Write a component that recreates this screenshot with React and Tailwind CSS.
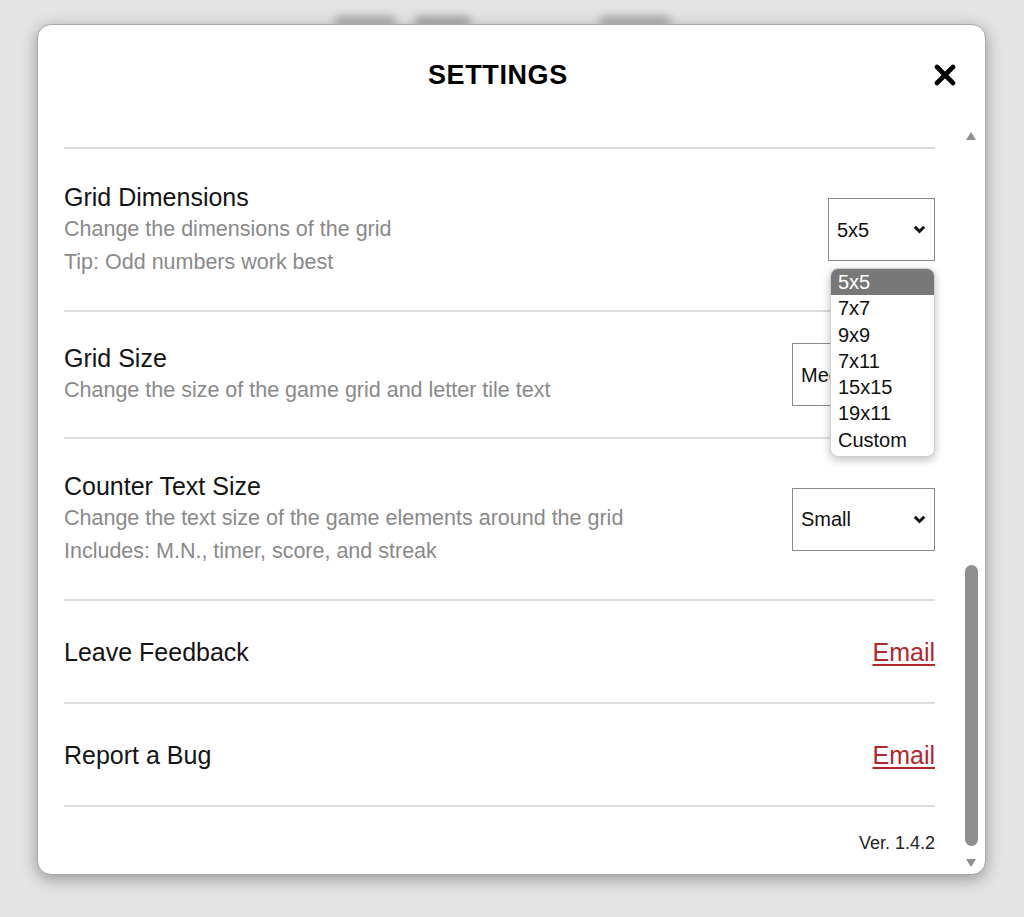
import React from "react";

const font = { fontFamily: '"Liberation Sans", Arial, sans-serif' };

function Chevron() {
  return (
    <svg width="13" height="9" viewBox="0 0 13 9" className="shrink-0">
      <polyline points="1.8,1.8 6.5,6.5 11.2,1.8" fill="none" stroke="#111" strokeWidth="3" />
    </svg>
  );
}

function FakeSelect({ value, width }) {
  return (
    <div
      className={`flex items-center justify-between h-[63px] border border-[#8a8a8a] bg-white pl-[8px] pr-[8px] text-[20px] text-[#111] overflow-hidden ${width}`}
    >
      <span>{value}</span>
      <Chevron />
    </div>
  );
}

function Row({ title, lines, right, height }) {
  return (
    <div className={`flex items-center justify-between border-b-2 border-[#dcdcdc] ${height}`}>
      <div className="flex flex-col">
        <div className="text-[25px] leading-[32px] text-[#141414]">{title}</div>
        {lines.map((l) => (
          <div key={l} className="text-[21.5px] leading-[33px] text-[#8a8a8a]">
            {l}
          </div>
        ))}
      </div>
      {right}
    </div>
  );
}

function EmailLink() {
  return (
    <a href="#" className="text-[25px] leading-[30px] text-[#b3262b] underline underline-offset-[3px]">
      Email
    </a>
  );
}

export default function App() {
  const options = ["5x5", "7x7", "9x9", "7x11", "15x15", "19x11", "Custom"];

  return (
    <div className="w-full h-[917px] bg-[#e4e4e4] overflow-hidden" style={font}>
      {/* blurred page header behind the overlay */}
      <div className="h-[24px] flex items-end gap-[130px] pl-[335px] overflow-hidden">
        <div className="flex gap-[20px] mb-[-6px] blur-[4px]">
          <div className="w-[60px] h-[14px] rounded bg-[#a5a5a5]" />
          <div className="w-[55px] h-[14px] rounded bg-[#a0a0a0]" />
        </div>
        <div className="w-[70px] h-[14px] mb-[-6px] rounded bg-[#a5a5a5] blur-[4px]" />
      </div>

      {/* modal */}
      <div className="ml-[37px] w-[949px] h-[851px] bg-white rounded-[14px] border border-[#a8a8a8] shadow-[0_4px_16px_rgba(0,0,0,0.35)] flex flex-col overflow-hidden">
        <div className="h-[100px] shrink-0 flex items-center justify-between pl-[390px] pr-[28px]">
          <h1 className="text-[27px] font-bold tracking-[0.6px] text-black">SETTINGS</h1>
          <button className="w-[24px] h-[24px] flex items-center justify-center">
            <svg width="22" height="22" viewBox="0 0 22 22">
              <line x1="3" y1="3" x2="19" y2="19" stroke="#000" strokeWidth="4.6" strokeLinecap="round" />
              <line x1="19" y1="3" x2="3" y2="19" stroke="#000" strokeWidth="4.6" strokeLinecap="round" />
            </svg>
          </button>
        </div>

        <div className="flex-1 flex min-h-0">
          {/* scroll content */}
          <div className="flex-1 pl-[26px] pr-[27px] pt-[22px]">
            <div className="h-[2px] bg-[#dcdcdc]" />

            <Row
              height="h-[163px]"
              title="Grid Dimensions"
              lines={["Change the dimensions of the grid", "Tip: Odd numbers work best"]}
              right={
                <div className="relative">
                  <FakeSelect value="5x5" width="w-[107px]" />
                  <ul className="absolute left-[2px] top-[70px] w-[105px] bg-white rounded-[8px] border border-[#cfcfcf] shadow-[0_3px_10px_rgba(0,0,0,0.25)] overflow-hidden pb-[3px] z-10">
                    {options.map((o, i) => (
                      <li
                        key={o}
                        className={`pl-[7px] text-[20px] leading-[26.3px] ${
                          i === 0 ? "bg-[#787878] text-white" : "text-[#111]"
                        }`}
                      >
                        {o}
                      </li>
                    ))}
                  </ul>
                </div>
              }
            />

            <Row
              height="h-[127px]"
              title="Grid Size"
              lines={["Change the size of the game grid and letter tile text"]}
              right={<FakeSelect value="Medium" width="w-[143px]" />}
            />

            <Row
              height="h-[162px]"
              title="Counter Text Size"
              lines={[
                "Change the text size of the game elements around the grid",
                "Includes: M.N., timer, score, and streak",
              ]}
              right={<FakeSelect value="Small" width="w-[143px]" />}
            />

            <Row height="h-[103px]" title="Leave Feedback" lines={[]} right={<EmailLink />} />
            <Row height="h-[103px]" title="Report a Bug" lines={[]} right={<EmailLink />} />

            <div className="pt-[25px] flex justify-end text-[18px] leading-[22px] text-[#222]">Ver. 1.4.2</div>
          </div>

          {/* scrollbar */}
          <div className="w-[18px] mr-[5px] flex flex-col items-center pt-[6px] pb-[6px]">
            <svg width="12" height="10" viewBox="0 0 12 10">
              <polygon points="6,1 11,9 1,9" fill="#8f8f8f" />
            </svg>
            <div className="flex-1 w-full flex flex-col justify-end items-center pt-[4px] pb-[12px]">
              <div className="w-[13px] h-[281px] rounded-full bg-[#8f8f8f]" />
            </div>
            <svg width="12" height="10" viewBox="0 0 12 10">
              <polygon points="1,1 11,1 6,9" fill="#8f8f8f" />
            </svg>
          </div>
        </div>
      </div>
    </div>
  );
}
